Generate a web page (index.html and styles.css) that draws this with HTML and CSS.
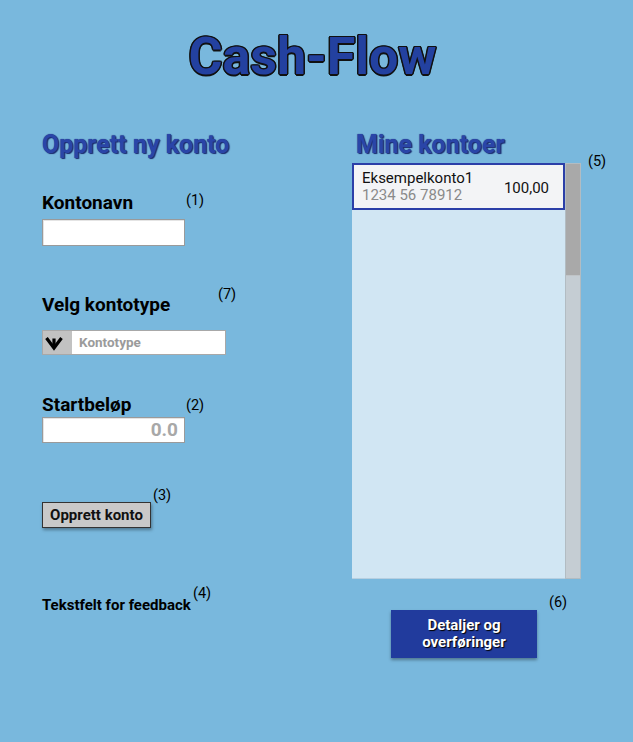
FILE: index.html
```html
<!DOCTYPE html>
<html lang="no">
<head>
<meta charset="utf-8">
<title>Cash-Flow</title>
<link rel="stylesheet" href="styles.css">
</head>
<body>
<div class="page">
  <h1 class="title">Cash-Flow</h1>
  <div class="columns">
    <section class="left">
      <h2 class="heading">Opprett ny konto</h2>

      <div class="field f-name">
        <label class="label">Kontonavn</label>
        <span class="note note-1">(1)</span>
        <input class="input" type="text">
      </div>

      <div class="field f-type">
        <label class="label">Velg kontotype</label>
        <span class="note note-7">(7)</span>
        <div class="select">
          <span class="select-btn">
            <svg class="chev" width="18" height="16" viewBox="0 0 18 16"><path d="M1.5 3 L9 13 L16.5 3" fill="none" stroke="#000" stroke-width="3.2"/><path d="M9 3.5 L9 12.5" stroke="#000" stroke-width="3.2"/></svg>
          </span>
          <span class="select-text">Kontotype</span>
        </div>
      </div>

      <div class="field f-amount">
        <label class="label">Startbeløp</label>
        <span class="note note-2">(2)</span>
        <div class="input amount">0.0</div>
      </div>

      <div class="field f-btn">
        <button class="btn-create">Opprett konto</button>
        <span class="note note-3">(3)</span>
      </div>

      <div class="field f-feedback">
        <span class="feedback">Tekstfelt for feedback</span>
        <span class="note note-4">(4)</span>
      </div>
    </section>

    <section class="right">
      <h2 class="heading">Mine kontoer</h2>
      <div class="list-wrap">
        <div class="list">
          <div class="item">
            <div class="item-info">
              <div class="item-name">Eksempelkonto1</div>
              <div class="item-num">1234 56 78912</div>
            </div>
            <div class="item-amount">100,00</div>
          </div>
        </div>
        <div class="scrollbar"><div class="thumb"></div></div>
        <span class="note note-5">(5)</span>
      </div>
      <div class="details-row">
        <button class="btn-details">Detaljer og<br>overføringer</button>
        <span class="note note-6">(6)</span>
      </div>
    </section>
  </div>
</div>
</body>
</html>
```

FILE: styles.css
```css
* { box-sizing: border-box; }
html, body { margin: 0; padding: 0; }
body {
  background: #79b8dd;
  font-family: Roboto, "Liberation Sans", sans-serif;
  color: #000;
  width: 633px;
  height: 742px;
  overflow: hidden;
}
.page { padding-top: 26px; }
.title {
  margin: 0;
  font-size: 52px;
  line-height: 61px;
  font-weight: 700;
  text-align: center;
  padding-right: 8px;
  color: #2341a0;
  text-shadow:
    -1.5px 0 0 #111, 1.5px 0 0 #111, 0 -1.5px 0 #111, 0 1.5px 0 #111,
    -1px -1px 0 #111, 1px -1px 0 #111, -1px 1px 0 #111, 1px 1px 0 #111;
}
.columns {
  display: grid;
  grid-template-columns: 310px 1fr;
  padding-left: 42px;
  margin-top: 43px;
}
.heading {
  margin: 0;
  font-size: 25px;
  line-height: 29px;
  font-weight: 700;
  color: #2a45a8;
  text-shadow: 0 0 1px #16276e, 1px 1px 1px #1a2c70;
}
.field { position: relative; }
.label {
  display: block;
  font-size: 19px;
  line-height: 22px;
  font-weight: 700;
}
.note {
  position: absolute;
  font-size: 14.5px;
  line-height: 16px;
  font-weight: 400;
  color: #000;
}
.f-name { margin-top: 33px; }
.note-1 { left: 144px; top: 1px; }
.input {
  display: block;
  margin-top: 5px;
  width: 143px;
  height: 27px;
  border: 1px solid #9a9a9a;
  background: #fff;
  box-shadow: inset 1px 1px 0 #e4e4e4;
  padding: 0;
  outline: none;
}
.f-type { margin-top: 48px; }
.note-7 { left: 176px; top: -7px; }
.select {
  margin-top: 14px;
  width: 184px;
  height: 25px;
  display: flex;
  align-items: stretch;
  border: 1px solid #a8a8a8;
  background: #fff;
}
.select-btn {
  flex: 0 0 29px;
  background: #c2c2c2;
  display: flex;
  align-items: center;
  justify-content: flex-start;
  padding-left: 2px;
}
.chev { flex-shrink: 0; display: block; }
.select-text {
  margin-left: 7px;
  font-size: 13.5px;
  font-weight: 700;
  color: #9b9b9b;
  line-height: 23px;
}
.f-amount { margin-top: 39px; }
.note-2 { left: 144px; top: 4px; }
.amount {
  margin-top: 1px;
  height: 26px;
  text-align: right;
  font-size: 19px;
  font-weight: 700;
  color: #a8a8a8;
  line-height: 24px;
  padding-right: 6px;
}
.f-btn { margin-top: 59px; }
.btn-create {
  display: block;
  width: 109px;
  height: 26px;
  padding: 0;
  font-family: Roboto, "Liberation Sans", sans-serif;
  font-size: 15px;
  font-weight: 700;
  color: #111;
  background: #c9c9c9;
  border: 1px solid #333;
  box-shadow: 1px 2px 3px rgba(0,0,0,0.35);
}
.note-3 { left: 111px; top: -14px; }
.f-feedback { margin-top: 67px; }
.feedback {
  font-size: 15px;
  font-weight: 700;
  line-height: 18px;
}
.note-4 { left: 151px; top: -9px; }

.right { position: relative; }
.right .heading { margin-left: 4px; }
.list-wrap {
  position: relative;
  margin-top: 4px;
  display: flex;
  width: 229px;
  height: 416px;
}
.list {
  flex: 1;
  background: #d1e6f3;
  border-bottom: 1px solid #b6cfe0;
}
.item {
  height: 47px;
  border: 2px solid #2b3fa8;
  background: #f3f4f6;
  display: flex;
  align-items: center;
  justify-content: space-between;
  padding: 0 14px 0 8px;
}
.item-name {
  font-size: 15px;
  line-height: 17px;
  color: #111;
}
.item-num {
  font-size: 15px;
  line-height: 17px;
  color: #8a8a8a;
}
.item-amount {
  font-size: 15px;
  color: #111;
  margin-top: 2px;
}
.scrollbar {
  width: 16px;
  background: #c5cdd3;
  border: 1px solid #b2bcc2;
}
.thumb {
  height: 112px;
  background: #a9a9a9;
  border-bottom: 1px solid #c0c4c7;
}
.note-5 { left: 236px; top: -9px; }
.details-row {
  position: relative;
  margin-top: 31px;
  margin-left: 39px;
}
.btn-details {
  display: block;
  width: 146px;
  height: 48px;
  padding: 0;
  border: none;
  background: #213b9d;
  color: #fff;
  font-family: Roboto, "Liberation Sans", sans-serif;
  font-size: 15px;
  line-height: 17px;
  font-weight: 700;
  text-shadow: 1px 1px 1px #000;
  box-shadow: 0 2px 3px rgba(0,0,0,0.35);
}
.note-6 { left: 158px; top: -15px; }
```
